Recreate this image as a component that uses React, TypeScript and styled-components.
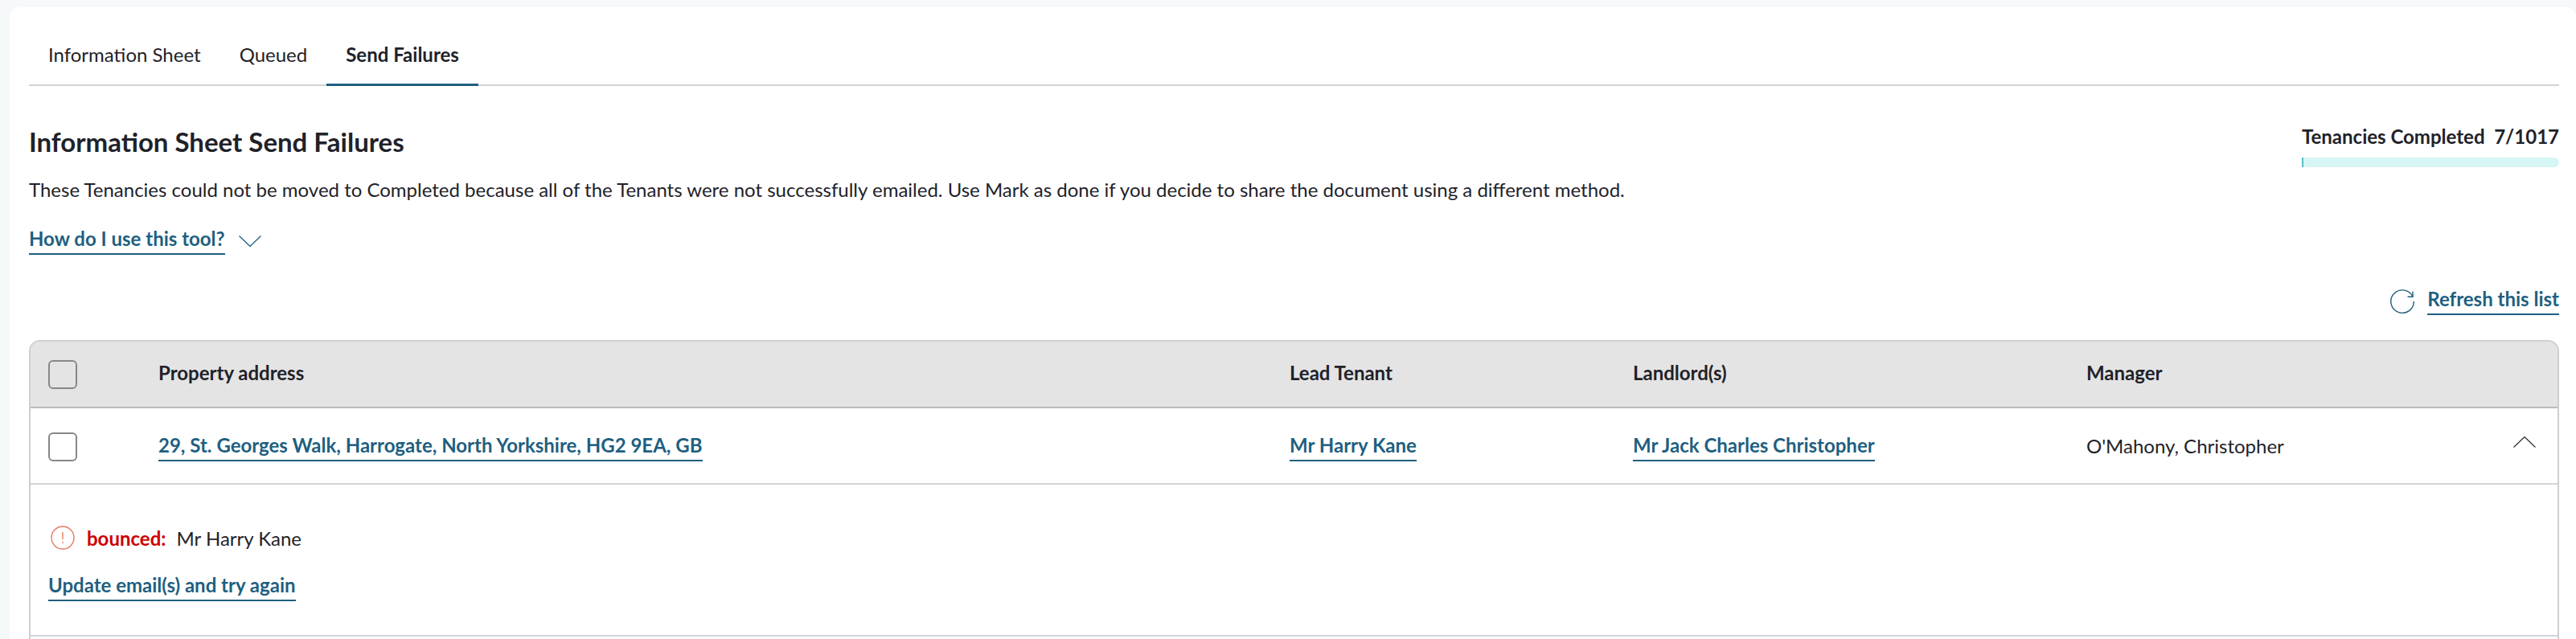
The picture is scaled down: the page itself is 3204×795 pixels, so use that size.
import React from 'react';
import styled, { createGlobalStyle } from 'styled-components';

const GlobalStyle = createGlobalStyle`
    html, body {
        margin: 0;
        padding: 0;
        height: 795px;
        overflow: hidden;
        background-color: #f5f9fa;
        font-family: Lato, 'Open Sans', sans-serif;
        color: #1f2229;
    }
    * {
        box-sizing: border-box;
    }
`;

const Page = styled.div`
    height: 795px;
    padding: 9px 0 0 12px;
    overflow: hidden;
`;

const Card = styled.main`
    display: flex;
    flex-direction: column;
    background-color: #ffffff;
    border-radius: 12px 12px 0 0;
    height: 786px;
    padding: 44px 21px 0 24px;
`;

const Tabs = styled.nav`
    display: flex;
    flex: none;
    height: 54px;
    border-bottom: 2px solid #d2d4d6;
`;

const Tab = styled.div<{ $active?: boolean }>`
    height: 54px;
    padding: 0 24px 22px;
    display: flex;
    align-items: center;
    font-size: 24px;
    font-weight: ${({ $active }) => ($active ? 700 : 400)};
    border-bottom: 3px solid ${({ $active }) => ($active ? '#1f5f80' : 'transparent')};
`;

const Intro = styled.section`
    display: flex;
    flex: none;
    justify-content: space-between;
    height: 245px;
`;

const IntroText = styled.div`
    padding-top: 49px;
`;

const Heading = styled.h1`
    margin: 0;
    font-size: 33px;
    line-height: 40px;
    font-weight: 700;
`;

const Description = styled.p`
    margin: 24px 0 0;
    font-size: 24px;
    line-height: 32px;
`;

const Link = styled.a`
    color: #1f5f80;
    font-size: 24px;
    font-weight: 700;
    line-height: 30px;
    padding-bottom: 3px;
    border-bottom: 2px solid #1f5f80;
    display: inline-block;
    cursor: pointer;
`;

const HowToRow = styled.div`
    display: flex;
    align-items: center;
    gap: 17px;
    margin-top: 30px;
`;

const Progress = styled.div`
    width: 320px;
    padding-top: 47px;
`;

const ProgressLabel = styled.div`
    font-size: 24px;
    font-weight: 700;
    line-height: 32px;
    display: flex;
    justify-content: space-between;
    white-space: nowrap;
`;

const ProgressTrack = styled.div`
    height: 12px;
    margin-top: 10px;
    background-color: #d6f5f5;
    border-radius: 0 6px 6px 0;
`;

const ProgressFill = styled.div`
    height: 100%;
    background-color: #5bbcc4;
`;

const RefreshRow = styled.div`
    display: flex;
    flex: none;
    justify-content: flex-end;
    align-items: flex-end;
    gap: 16px;
    height: 40px;
    margin-bottom: 31px;
`;

const Table = styled.section`
    flex: 1;
    border: 2px solid #cdcfd1;
    border-bottom: none;
    border-radius: 14px 14px 0 0;
    overflow: hidden;
`;

const Row = styled.div<{ $header?: boolean }>`
    display: grid;
    grid-template-columns: 137px 1407px 427px 564px 1fr 28px;
    align-items: center;
    height: ${({ $header }) => ($header ? '83px' : '95px')};
    padding: ${({ $header }) => ($header ? '0 27px 0 22px' : '3px 27px 0 22px')};
    font-size: 24px;
    font-weight: ${({ $header }) => ($header ? 700 : 400)};
    background-color: ${({ $header }) => ($header ? '#e4e4e4' : '#ffffff')};
    border-bottom: 2px solid ${({ $header }) => ($header ? '#b9bbbd' : '#d2d4d6')};
`;

const Checkbox = styled.span<{ $header?: boolean }>`
    display: block;
    width: 36px;
    height: 36px;
    border: 2px solid #85878a;
    border-radius: 6px;
    background-color: ${({ $header }) => ($header ? 'transparent' : '#ffffff')};
`;

const Cell = styled.div`
    white-space: nowrap;
`;

const TextCell = styled(Cell)`
    padding-bottom: 4px;
`;

const Detail = styled.div`
    height: 189px;
    padding: 51px 22px 0;
    border-bottom: 2px solid #d2d4d6;
`;

const BounceLine = styled.div`
    display: flex;
    align-items: center;
    height: 30px;
    font-size: 24px;
    margin-bottom: 29px;
`;

const BounceIcon = styled.svg`
    width: 30px;
    height: 30px;
    margin-left: 3px;
    margin-right: 15px;
`;

const BounceLabel = styled.span`
    color: #cc0000;
    font-weight: 700;
    margin-right: 13px;
`;

const ChevronSvg = styled.svg<{ $up?: boolean }>`
    display: block;
    margin-bottom: ${({ $up }) => ($up ? '12px' : '0')};
`;

const RefreshSvg = styled.svg`
    display: block;
    margin-bottom: 2px;
`;

const ChevronDown = () => (
    <ChevronSvg width="28" height="14" viewBox="0 0 28 14" fill="none" stroke="#1f5f80" strokeWidth="1.3">
        <path d="M.5.5L14 13.5 27.5.5" />
    </ChevronSvg>
);

const ChevronUp = () => (
    <ChevronSvg $up width="28" height="14" viewBox="0 0 28 14" fill="none" stroke="#33363b" strokeWidth="1.3">
        <path d="M.5 13.5L14 .5l13.5 13" />
    </ChevronSvg>
);

const RefreshIcon = () => (
    <RefreshSvg width="30" height="30" viewBox="0 0 30 30" fill="none" stroke="#1f5f80" strokeWidth="1.4">
        <path d="M28 9.3A14.25 14.25 0 1 0 29.25 15" />
        <path d="M21.5 9.3H28V2.7" />
    </RefreshSvg>
);

const App = () => (
    <>
        <GlobalStyle />
        <Page>
            <Card>
                <Tabs>
                    <Tab>Information Sheet</Tab>
                    <Tab>Queued</Tab>
                    <Tab $active>Send Failures</Tab>
                </Tabs>
                <Intro>
                    <IntroText>
                        <Heading>Information Sheet Send Failures</Heading>
                        <Description>
                            These Tenancies could not be moved to Completed because all of the Tenants were not
                            successfully emailed. Use Mark as done if you decide to share the document using a
                            different method.
                        </Description>
                        <HowToRow>
                            <Link>How do I use this tool?</Link>
                            <ChevronDown />
                        </HowToRow>
                    </IntroText>
                    <Progress>
                        <ProgressLabel>
                            <span>Tenancies Completed</span>
                            <span>7/1017</span>
                        </ProgressLabel>
                        <ProgressTrack>
                            <ProgressFill style={{ width: `${(7 / 1017) * 100}%` }} />
                        </ProgressTrack>
                    </Progress>
                </Intro>
                <RefreshRow>
                    <RefreshIcon />
                    <Link>Refresh this list</Link>
                </RefreshRow>
                <Table>
                    <Row $header>
                        <Checkbox $header />
                        <TextCell>Property address</TextCell>
                        <TextCell>Lead Tenant</TextCell>
                        <TextCell>Landlord(s)</TextCell>
                        <TextCell>Manager</TextCell>
                        <span />
                    </Row>
                    <Row>
                        <Checkbox />
                        <Cell>
                            <Link>29, St. Georges Walk, Harrogate, North Yorkshire, HG2 9EA, GB</Link>
                        </Cell>
                        <Cell>
                            <Link>Mr Harry Kane</Link>
                        </Cell>
                        <Cell>
                            <Link>Mr Jack Charles Christopher</Link>
                        </Cell>
                        <TextCell>O'Mahony, Christopher</TextCell>
                        <ChevronUp />
                    </Row>
                    <Detail>
                        <BounceLine>
                            <BounceIcon viewBox="0 0 30 30" fill="none" stroke="#e47a62" strokeWidth="1.4">
                                <circle cx="15" cy="15" r="14" />
                                <path d="M15 8v9M15 20v2" />
                            </BounceIcon>
                            <BounceLabel>bounced:</BounceLabel>
                            Mr Harry Kane
                        </BounceLine>
                        <Link>Update email(s) and try again</Link>
                    </Detail>
                </Table>
            </Card>
        </Page>
    </>
);

export default App;
